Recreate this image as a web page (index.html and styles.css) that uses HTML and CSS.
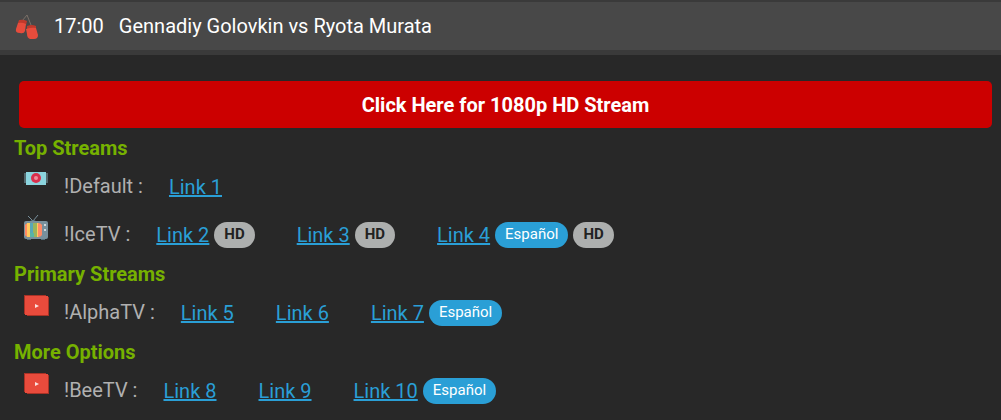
FILE: index.html
```html
<!DOCTYPE html>
<html lang="en">
<head>
    <meta charset="UTF-8">
    <meta name="viewport" content="width=device-width, initial-scale=1.0">
    <title>Gennadiy Golovkin vs Ryota Murata</title>
    <link rel="stylesheet" href="styles.css">
</head>
<body>

    <!-- Event Header -->
    <header class="event-header">
        <svg class="event-icon" viewBox="0 -2 24 28" aria-hidden="true">
            <path d="M7 7 L12 1 L16 11" fill="none" stroke="#7b7068" stroke-width="1"/>
            <path d="M4 6 Q8 5 12 7 L11 11 L3 9 Z" fill="#c0392b"/>
            <path d="M3 9 Q7 8 11 10 L10 17 Q9 20 5 19 Q0 19 1 15 Z" fill="#e74c3c"/>
            <path d="M12 12 Q17 10 21 12 L21 16 L12 17 Z" fill="#c0392b"/>
            <path d="M11 15 Q17 13 21 14 L23 21 Q23 25 19 25 L15 25 Q12 24 12 20 Z" fill="#e74c3c"/>
        </svg>
        <span class="event-time">17:00</span>
        <span class="event-name">Gennadiy Golovkin vs Ryota Murata</span>
    </header>

    <main class="streams">
        <a class="hd-button" href="#">Click Here for 1080p HD Stream</a>

        <!-- Top Streams -->
        <section class="stream-group">
            <h2>Top Streams</h2>
            <div class="stream-row">
                <svg class="stream-icon" viewBox="0 0 24 24" aria-hidden="true">
                    <path d="M0 5 H24 V15 H0 Z" fill="#53676c"/>
                    <rect x="2" y="4" width="20" height="13" fill="#8bd4de"/>
                    <circle cx="12" cy="10" r="5" fill="#d92f4c"/>
                    <circle cx="12" cy="10" r="2" fill="#f08c9c"/>
                </svg>
                <span class="stream-name">!Default :</span>
                <div class="stream-links">
                    <span class="stream-link"><a href="#">Link 1</a></span>
                </div>
            </div>
            <div class="stream-row">
                <svg class="stream-icon" viewBox="0 0 24 24" aria-hidden="true">
                    <path d="M4 0 L9 5 M14 -1 L9 5" fill="none" stroke="#78909c" stroke-width="1"/>
                    <path d="M5 6 Q9 2 13 6 Z" fill="#607d8b"/>
                    <rect x="3" y="22" width="4" height="2" fill="#546e7a"/>
                    <rect x="17" y="22" width="4" height="2" fill="#546e7a"/>
                    <rect x="0" y="5" width="24" height="18" rx="2" fill="#78909c"/>
                    <path d="M1 9 Q2 7 6 7 V21 Q2 21 1 19 Z" fill="#ff8a65"/>
                    <rect x="3" y="7" width="3" height="14" fill="#ffca5f"/>
                    <rect x="6" y="7" width="4" height="14" fill="#58a8b8"/>
                    <rect x="9" y="7" width="4" height="14" fill="#9bb45c"/>
                    <rect x="6" y="17" width="4" height="4" fill="#58b5a5"/>
                    <rect x="13" y="7" width="2" height="14" fill="#ffca5f"/>
                    <path d="M14 7 Q17 7 18 9 V19 Q17 21 14 21 Z" fill="#ff8a65"/>
                    <circle cx="21" cy="9" r="1" fill="#eceff1"/>
                    <circle cx="21" cy="14" r="1" fill="#eceff1"/>
                </svg>
                <span class="stream-name">!IceTV :</span>
                <div class="stream-links">
                    <span class="stream-link"><a href="#">Link 2</a><span class="badge badge-hd">HD</span></span>
                    <span class="stream-link"><a href="#">Link 3</a><span class="badge badge-hd">HD</span></span>
                    <span class="stream-link"><a href="#">Link 4</a><span class="badge badge-lang">Español</span><span class="badge badge-hd">HD</span></span>
                </div>
            </div>
        </section>

        <!-- Primary Streams -->
        <section class="stream-group">
            <h2>Primary Streams</h2>
            <div class="stream-row">
                <svg class="stream-icon" viewBox="0 0 24 24" aria-hidden="true">
                    <path d="M0 1 H22 V3 H25 V22 H3 V20 H0 Z" fill="#a93226"/>
                    <rect x="1" y="2" width="23" height="19" fill="#e94b3c"/>
                    <path d="M11 10 L15 12 L11 14 Z" fill="#fbe3e0"/>
                </svg>
                <span class="stream-name">!AlphaTV :</span>
                <div class="stream-links">
                    <span class="stream-link"><a href="#">Link 5</a></span>
                    <span class="stream-link"><a href="#">Link 6</a></span>
                    <span class="stream-link"><a href="#">Link 7</a><span class="badge badge-lang">Español</span></span>
                </div>
            </div>
        </section>

        <!-- More Options -->
        <section class="stream-group">
            <h2>More Options</h2>
            <div class="stream-row">
                <svg class="stream-icon" viewBox="0 0 24 24" aria-hidden="true">
                    <path d="M0 1 H22 V3 H25 V22 H3 V20 H0 Z" fill="#a93226"/>
                    <rect x="1" y="2" width="23" height="19" fill="#e94b3c"/>
                    <path d="M11 10 L15 12 L11 14 Z" fill="#fbe3e0"/>
                </svg>
                <span class="stream-name">!BeeTV :</span>
                <div class="stream-links">
                    <span class="stream-link"><a href="#">Link 8</a></span>
                    <span class="stream-link"><a href="#">Link 9</a></span>
                    <span class="stream-link"><a href="#">Link 10</a><span class="badge badge-lang">Español</span></span>
                </div>
            </div>
        </section>
    </main>

</body>
</html>
```
FILE: styles.css
```css
* {
    box-sizing: border-box;
}

body {
    margin: 0;
    background-color: #282828;
    color: #b0b0b0;
    font-family: Roboto, Arial, sans-serif;
    font-size: 20px;
    line-height: 24px;
}

/* Event Header */
.event-header {
    display: flex;
    align-items: center;
    gap: 15px;
    padding: 12px 15px;
    border-top: 2px solid #3a3a3a;
    border-bottom: 5px solid #3a3a3a;
    background-color: #484848;
    color: #fff;
}

.event-icon {
    width: 24px;
    height: 28px;
    margin: -2px 0;
}

/* Streams */
.streams {
    padding: 26px 9px 0 14px;
}

.hd-button {
    display: block;
    margin: 0 0 5px 5px;
    padding: 12px 12px 11px;
    border-radius: 5px;
    background-color: #c00;
    color: #fff;
    font-weight: 700;
    text-align: center;
    text-decoration: none;
}

.stream-group h2 {
    margin: 0;
    padding: 3px 0;
    color: #76b100;
    font-size: 20px;
    font-weight: 700;
}

.stream-row {
    display: flex;
    align-items: center;
    height: 48px;
    padding: 0 0 2px 10px;
}

.stream-icon {
    width: 24px;
    height: 24px;
    margin: 0 16px 12px 0;
    overflow: visible;
}

.stream-links {
    display: flex;
    flex-wrap: wrap;
    gap: 42px;
    margin-left: 26px;
    padding-top: 2px;
}

.stream-link {
    display: flex;
    align-items: center;
    gap: 5px;
}

.stream-link a {
    color: #2a9fd6;
}

/* Badges */
.badge {
    padding: 0 10px 2px;
    border-radius: 13px;
    font-size: 15px;
}

.badge-hd {
    background-color: #adafae;
    color: #222;
    font-weight: 700;
}

.badge-lang {
    background-color: #2a9fd6;
    color: #fff;
}
```
